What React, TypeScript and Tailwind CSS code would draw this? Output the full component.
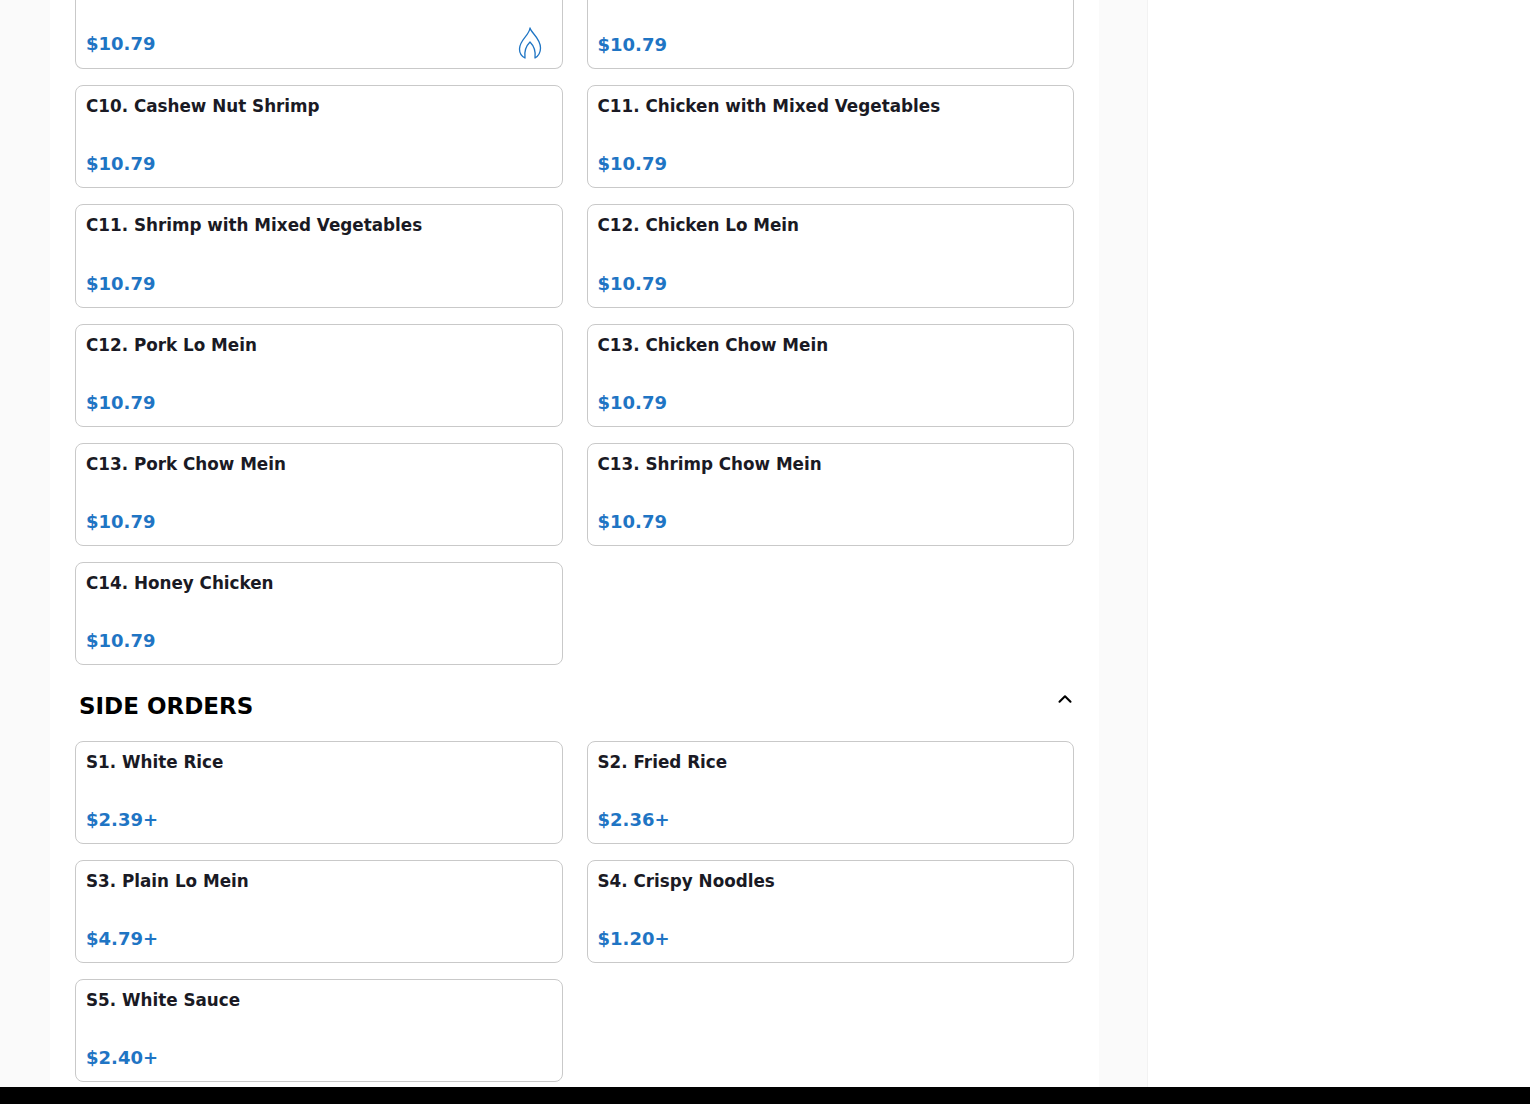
import { ChevronUp } from "lucide-react";

const Flame = () => (
  <svg width="24" height="32" viewBox="0 0 24 32" fill="none" stroke="#1f75c4" strokeWidth="1.3" strokeLinejoin="round" strokeLinecap="round" className="absolute right-[20px] bottom-[9px]">
    <path d="M12 1 C13 6 22.5 11 22.5 21 C22.5 26 19.5 29.5 17 31 C18 24 15 18 12 15 C9 18 6 24 7 31 C4 29.5 1.5 26 1.5 22 C1.5 13 11 9 12 1 Z" />
  </svg>
);

const Card = ({ name, price, short }: { name: string; price: string; short?: boolean }) => (
  <div className={`flex flex-col justify-between rounded-lg border border-[#c9c9c9] bg-white px-[10px] pt-[10px] pb-[12px] ${short ? "h-[103px]" : "h-[103.25px]"}`}>
    <div className="text-[16.8px] leading-[20px] font-bold text-[#1a1a24]">{name}</div>
    <div className="text-[18px] leading-[22px] font-bold text-[#1f75c4]">{price}</div>
  </div>
);

const CutCard = ({ price, flame }: { price: string; flame?: boolean }) => (
  <div className={`relative flex h-[69px] flex-col justify-end rounded-b-lg border border-t-0 border-[#c9c9c9] bg-white px-[10px] ${flame ? "pb-[13px]" : "pb-[12px]"}`}>
    <div className="text-[18px] leading-[22px] font-bold text-[#1f75c4]">{price}</div>
    {flame && <Flame />}
  </div>
);

const chicken = [
  ["C10. Cashew Nut Shrimp", "$10.79"],
  ["C11. Chicken with Mixed Vegetables", "$10.79"],
  ["C11. Shrimp with Mixed Vegetables", "$10.79"],
  ["C12. Chicken Lo Mein", "$10.79"],
  ["C12. Pork Lo Mein", "$10.79"],
  ["C13. Chicken Chow Mein", "$10.79"],
  ["C13. Pork Chow Mein", "$10.79"],
  ["C13. Shrimp Chow Mein", "$10.79"],
  ["C14. Honey Chicken", "$10.79"],
];

const sides = [
  ["S1. White Rice", "$2.39+"],
  ["S2. Fried Rice", "$2.36+"],
  ["S3. Plain Lo Mein", "$4.79+"],
  ["S4. Crispy Noodles", "$1.20+"],
  ["S5. White Sauce", "$2.40+"],
];

export default function App() {
  return (
    <div className="flex h-[1104px] flex-col overflow-hidden bg-white font-['DejaVu_Sans',sans-serif]">
      <div className="flex min-h-0 flex-1">
        <div className="w-[50px] bg-[#fafafa]" />
        <main className="w-[1049px] bg-white px-[25px]">
          <div className="grid grid-cols-2 gap-x-6 gap-y-4">
            <CutCard price="$10.79" flame />
            <CutCard price="$10.79" />
            {chicken.map(([name, price]) => (
              <Card key={name} name={name} price={price} />
            ))}
          </div>
          <div className="flex h-[76px] items-start justify-between pt-[25px] pl-1">
            <h2 className="text-[23px] leading-[32px] font-bold text-black">SIDE ORDERS</h2>
            <ChevronUp size={22} strokeWidth={2.3} className="mt-[-2px] mr-[-2px] text-black" />
          </div>
          <div className="grid grid-cols-2 gap-x-6 gap-y-4">
            {sides.map(([name, price]) => (
              <Card key={name} name={name} price={price} short />
            ))}
          </div>
        </main>
        <div className="w-[48px] bg-[#fafafa]" />
        <div className="flex-1 border-l border-[#f2f2f2] bg-white" />
      </div>
      <div className="h-[17px] bg-black" />
    </div>
  );
}
